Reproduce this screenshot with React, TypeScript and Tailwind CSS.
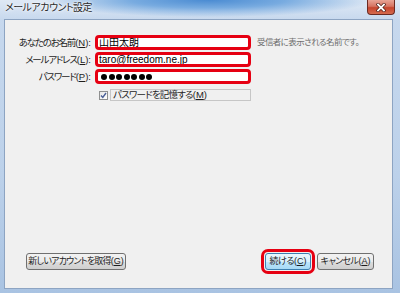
import type { ReactNode } from "react";

const jp = "font-['Liberation_Sans','Noto_Sans_CJK_JP',sans-serif] [font-feature-settings:'palt']";

function Key({ k, colon = false }: { k: string; colon?: boolean }) {
  return (
    <span className="tracking-normal">
      (<span className="underline">{k}</span>){colon ? ":" : ""}
    </span>
  );
}

function Field({ children }: { children: ReactNode }) {
  return (
    <div className="flex h-[15px] items-center overflow-hidden rounded-[4px] border-[3px] border-[#e60012] bg-white pl-[1px] text-[10px] leading-none text-black">
      {children}
    </div>
  );
}

function Label({ text, keyName }: { text: string; keyName: string }) {
  return (
    <div className="flex h-[15px] items-center justify-end whitespace-nowrap text-[9.5px] leading-none text-[#1e1e1e]">
      <span className="tracking-[-1.2px]">{text}</span>
      <Key k={keyName} colon />
    </div>
  );
}

function Button({ children, primary = false, width }: { children: ReactNode; primary?: boolean; width: string }) {
  return (
    <button
      className={
        "flex h-[17px] items-center justify-center whitespace-nowrap rounded-[3px] border text-[9px] leading-none text-[#1e1e1e] " +
        width +
        (primary
          ? " border-[#3c7fb1] bg-[linear-gradient(180deg,#eaf6fd_0%,#d9f0fc_50%,#bee6fd_51%,#a7d9f5_100%)] outline-[3px] outline-offset-[1px] outline-[#e60012] outline-solid"
          : " border-[#707070] bg-[linear-gradient(180deg,#f2f2f2_0%,#ebebeb_50%,#dddddd_51%,#cfcfcf_100%)]")
      }
    >
      {children}
    </button>
  );
}

export default function App() {
  return (
    <div className={`relative h-[293px] w-[400px] overflow-hidden bg-[linear-gradient(180deg,#c8d9ee_0%,#bcd1ea_60%,#a9c3e2_100%)] ${jp}`}>
      {/* title bar */}
      <div className="relative h-[19px] bg-[radial-gradient(ellipse_55%_120%_at_52%_0%,#4a8bd2_0%,#78abe0_35%,transparent_75%),linear-gradient(180deg,#dfe9f5,#c8d9ee)]">
        <span className="absolute left-[5px] top-[3px] text-[10px] leading-none tracking-[-0.5px] text-[#2a2a2a] [text-shadow:0_0_4px_#ffffff,0_0_2px_#ffffff]">
          メールアカウント設定
        </span>
        <div className="absolute right-[5px] top-0 flex h-[15px] w-[28px] items-center justify-center rounded-b-[4px] border border-t-0 border-[#6b2a22] bg-[linear-gradient(180deg,#e8a496_0%,#d67462_45%,#c6442d_55%,#d56c50_100%)]">
          <svg width="10" height="9" viewBox="0 0 10 9">
            <path d="M2 1.5 L8 7.5 M8 1.5 L2 7.5" stroke="#4a1a14" strokeWidth="3.2" strokeLinecap="square" />
            <path d="M2 1.5 L8 7.5 M8 1.5 L2 7.5" stroke="#ffffff" strokeWidth="1.8" strokeLinecap="square" />
          </svg>
        </div>
      </div>

      {/* client area */}
      <div className="ml-[4px] flex h-[270px] w-[389px] flex-col border border-[#8da4c2] bg-[#f0f0f0]">
        <div className="grid grid-cols-[86px_156px_1fr] gap-x-[4px] gap-y-[2px] pt-[15px]">
          <Label text="あなたのお名前" keyName="N" />
          <Field>
            <span className="text-[10px]">山田太朗</span>
          </Field>
          <div className="flex h-[15px] items-center whitespace-nowrap pl-[2px] text-[8.5px] leading-none tracking-[-0.6px] text-[#6d6d6d]">
            受信者に表示される名前です。
          </div>

          <Label text="メールアドレス" keyName="L" />
          <Field>taro@freedom.ne.jp</Field>
          <div />

          <Label text="パスワード" keyName="P" />
          <Field>
            <div className="flex gap-[1.5px] pl-[2px]">
              {[0, 1, 2, 3, 4, 5, 6].map((i) => (
                <span key={i} className="h-[6px] w-[6px] rounded-full bg-black" />
              ))}
            </div>
          </Field>
          <div />

          <div />
          <div className="mt-[3px] flex h-[12px] items-center gap-[2px] pl-[4px]">
            <span className="flex h-[9px] w-[9px] items-center justify-center border border-[#8e8f8f] bg-[linear-gradient(135deg,#e6e6e6,#ffffff)]">
              <svg width="7" height="7" viewBox="0 0 7 7">
                <path d="M1 3.5 L2.8 5.5 L6 1" fill="none" stroke="#4a5f97" strokeWidth="1.4" />
              </svg>
            </span>
            <div className="flex h-[12px] flex-1 items-center whitespace-nowrap border border-[#c6c6c6] pl-[2px] text-[9.5px] leading-none text-[#1e1e1e]">
              <span className="tracking-[-0.8px]">パスワードを記憶する</span>
              <Key k="M" />
            </div>
          </div>
          <div />
        </div>

        <div className="mt-auto flex items-center pb-[18px] pl-[21px] pr-[18px]">
          <Button width="w-[100px]">
            <span className="tracking-[-0.8px]">新しいアカウントを取得</span>
            <Key k="G" />
          </Button>
          <div className="flex-1" />
          <Button primary width="w-[46px]">
            <span className="tracking-[-0.5px]">続ける</span>
            <Key k="C" />
          </Button>
          <div className="w-[6px]" />
          <Button width="w-[57px]">
            <span className="tracking-[-0.6px]">キャンセル</span>
            <Key k="A" />
          </Button>
        </div>
      </div>
    </div>
  );
}
